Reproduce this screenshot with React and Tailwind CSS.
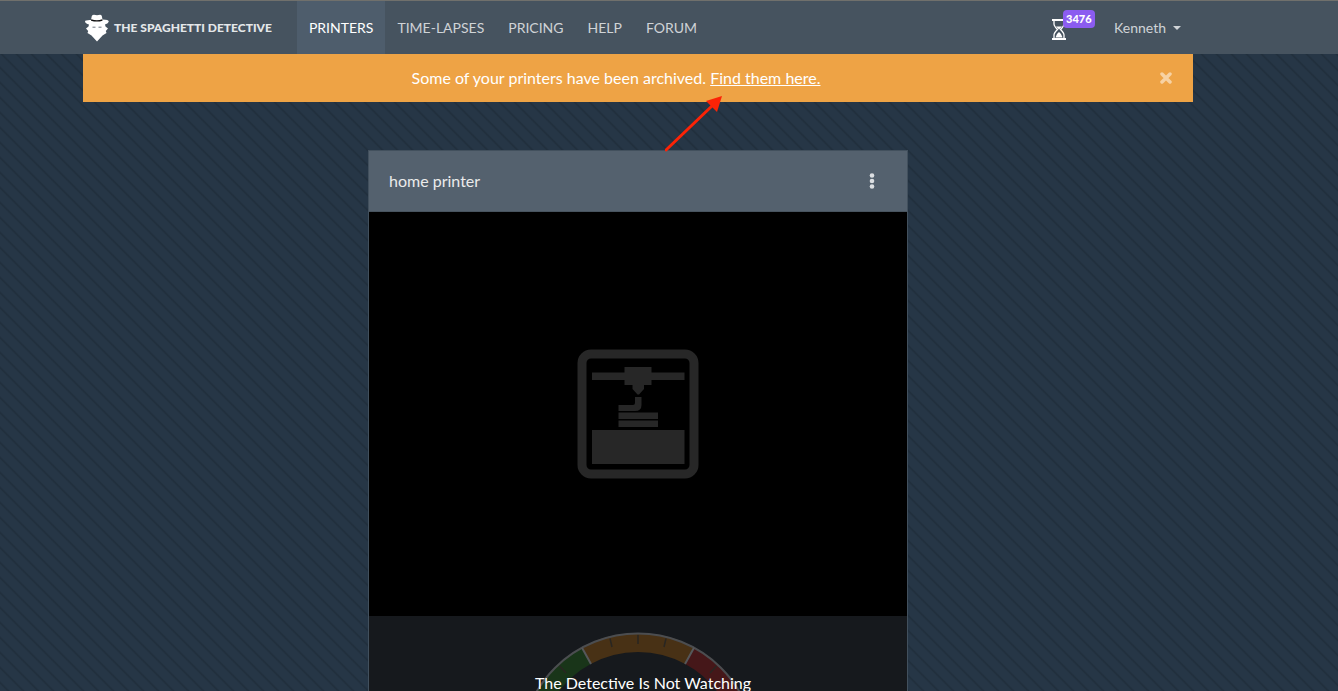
import React from "react";

const navItems = ["TIME-LAPSES", "PRICING", "HELP", "FORUM"];

function LogoMark() {
  return (
    <svg viewBox="0 0 26 28" className="h-7 w-[26px] shrink-0" aria-hidden="true">
      <path d="M8 6L8.800 2Q9.500 0.700 11 0.700L14 1.200L17 0.700Q18.300 0.700 18.800 2L19.500 5.500Q25.800 5.500 25.800 7.500Q25.500 9.500 22 10.500L22.500 12.500L25 14.500L22.800 17L23.500 19L19.500 21.500L14 27.500L8.500 21.500L4.500 19L5.200 17L3 14.500L5.500 12.500L6 10.500Q2.300 9.500 2 7.500Q2 5.800 8 6Z" fill="#fff" />
      <path d="M8.200 5.300Q14 7.300 19.300 5.300L19.500 6.700Q14 8.500 8 6.700Z" fill="#111" />
      <path d="M9.500 13.200H12.500M15.500 13.200H18.500" stroke="#46535f" strokeWidth="0.800" />
    </svg>
  );
}

function Hourglass() {
  return (
    <svg viewBox="0 0 14 21" className="h-[21px] w-[14px]" fill="none" stroke="#fff" aria-hidden="true">
      <path d="M0 1H14M0 20H14" strokeWidth="2" />
      <path d="M2 2V5Q2 7 5.500 10.500Q2 14 2 16V19M12 2V5Q12 7 8.500 10.500Q12 14 12 16V19" strokeWidth="1.300" />
      <path d="M4 7.500H10L7 10.500ZM3.500 18.500Q4 15 7 13Q10 15 10.500 18.500Z" fill="#fff" stroke="none" />
    </svg>
  );
}

function PrinterIcon() {
  return (
    <svg viewBox="0 0 122 130" className="h-[130px] w-[122px]" fill="#272727" aria-hidden="true">
      <rect x="5" y="5" width="112" height="120" rx="9" fill="none" stroke="#272727" strokeWidth="9" />
      <path d="M15 23.500H47.500V18H74.500V23.500H107.500V31H74.500V36H67V40L62 45.500H60.500L55.500 40V36H47.500V31H15Z" />
      <path d="M58 48H64.500V56Q64.500 62 58 62H41.500V56H56Q58 56 58 54Z" />
      <path d="M41.500 63.500H81V70H41.500ZM41.500 71.500H81V78H41.500ZM15 81H107.500V115H15Z" />
    </svg>
  );
}

function Gauge() {
  return (
    <svg viewBox="0 0 240 120" className="h-[120px] w-[240px]" fill="none" aria-hidden="true">
      <path d="M11.500 119A108.500 108.500 0 0 1 68.200 23.600" stroke="#193519" strokeWidth="19" />
      <path d="M68.200 23.600A108.500 108.500 0 0 1 171.800 23.600" stroke="#483115" strokeWidth="19" />
      <path d="M171.800 23.600A108.500 108.500 0 0 1 228.500 119" stroke="#451719" strokeWidth="19" />
      <path d="M2.500 119A117.500 117.500 0 0 1 237.500 119" stroke="#4b4d50" strokeWidth="2" />
      <path d="M64 15.700L73 32M176 15.700L167 32" stroke="#55575a" strokeWidth="2" />
      <path d="M120 3V12M92 6.500L94 15M148 6.500L146 15M41.500 34L48 41M198.500 34L192 41" stroke="#292622" strokeWidth="1.500" />
    </svg>
  );
}

export default function App() {
  return (
    <div className="h-screen overflow-hidden bg-[#263646] bg-[linear-gradient(45deg,#263646_0%,#263646_18%,#202e3b_25%,#263646_32%,#263646_68%,#202e3b_75%,#263646_82%)] bg-[length:15px_15px] font-['Lato',sans-serif] text-white">
      <header className="border-t border-[#70706c] bg-[#46535f] pr-[62px]">
        <div className="mx-auto flex h-[53px] w-full max-w-[1110px] items-center text-sm text-white/75">
          <a href="#" className="flex items-center gap-[5px] text-[12px] font-black whitespace-nowrap text-[#e4e7e9]">
            <LogoMark />
            THE SPAGHETTI DETECTIVE
          </a>
          <nav className="ml-[25px] flex h-full items-center">
            <a href="#" className="flex h-full items-center bg-[#4e5d6c] px-3 text-white">PRINTERS</a>
            {navItems.map((item) => (
              <a key={item} href="#" className="flex h-full items-center px-3">{item}</a>
            ))}
          </nav>
          <a href="#" aria-label="Detective hours" className="relative mt-1 mr-12 ml-auto">
            <Hourglass />
            <span className="absolute -top-[9px] left-[11px] rounded bg-[#8b5cf0] px-[3px] text-[11px] leading-[18px] font-black text-white">3476</span>
          </a>
          <button type="button" className="mr-3 flex items-center gap-[7px]">
            Kenneth
            <svg viewBox="0 0 8 4" className="h-1 w-2" fill="currentColor" aria-hidden="true"><path d="M0 0H8L4 4Z" /></svg>
          </button>
        </div>
      </header>
      <main className="pr-[62px]">
        <div role="alert" className="mx-auto flex h-12 w-full max-w-[1110px] items-center bg-[#eea345] pr-5">
          <p className="mr-[10px] flex-1 text-center text-base">
            Some of your printers have been archived.{" "}
            <span className="relative">
              <a href="#" className="underline">Find them here.</a>
              <svg viewBox="0 0 60 60" className="pointer-events-none absolute top-[26px] -left-[45px] h-[60px] w-[60px]" aria-hidden="true">
                <path d="M1 56L48 11" stroke="#fc2306" strokeWidth="3" strokeLinecap="round" />
                <path d="M57 2L52 18L41 7Z" fill="#fc2306" />
              </svg>
            </span>
          </p>
          <button type="button" aria-label="Close" className="p-[1px]">
            <svg viewBox="0 0 12 12" className="h-3 w-3" aria-hidden="true">
              <path d="M2 2L10 10M10 2L2 10" stroke="#f7d2a3" strokeWidth="3.500" strokeLinecap="round" />
            </svg>
          </button>
        </div>
        <section className="mx-auto mt-12 w-full max-w-[540px] border border-[#42505d] bg-[#16191d]">
          <div className="flex h-[61px] items-center justify-between border-b border-[#48545f] bg-[#54616e] px-5 text-[#ebebeb]">
            <h2 className="text-base">home printer</h2>
            <button type="button" aria-label="Printer menu" className="px-3">
              <svg viewBox="0 0 6 16" className="h-4 w-[6px]" fill="#dcdfe2" aria-hidden="true">
                <circle cx="3" cy="2.500" r="2.300" /><circle cx="3" cy="8" r="2.300" /><circle cx="3" cy="13.500" r="2.300" />
              </svg>
            </button>
          </div>
          <div className="flex h-[404px] items-center justify-center bg-black">
            <PrinterIcon />
          </div>
          <div className="relative flex justify-center pt-4 pb-10">
            <Gauge />
            <p className="absolute inset-x-0 top-[55px] pl-[10px] text-center text-base">The Detective Is Not Watching</p>
          </div>
        </section>
      </main>
    </div>
  );
}
